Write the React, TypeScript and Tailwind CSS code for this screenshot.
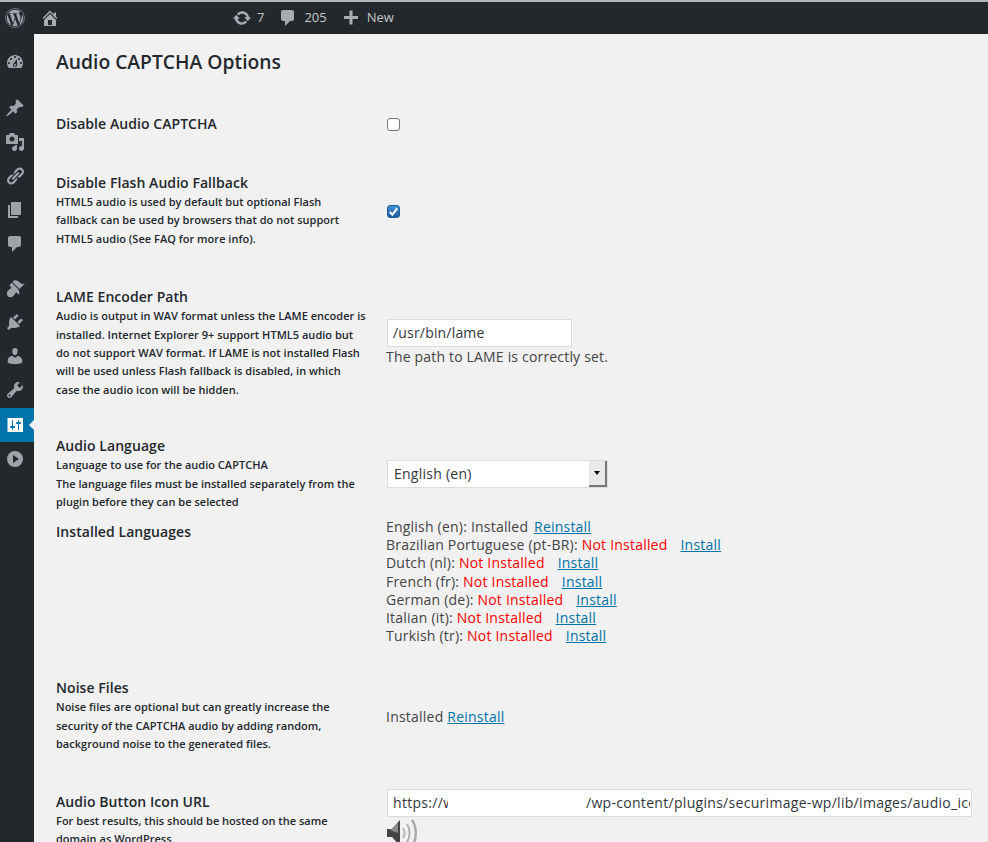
import React from "react";
import { FaWordpress } from "react-icons/fa";

const P = {
  dashboard: "M3.76 16h12.48c1.1-1.37 1.76-3.11 1.76-5 0-4.42-3.58-8-8-8s-8 3.58-8 8c0 1.89.66 3.63 1.76 5zM10 4c.55 0 1 .45 1 1s-.45 1-1 1-1-.45-1-1 .45-1 1-1zM6 6c.55 0 1 .45 1 1s-.45 1-1 1-1-.45-1-1 .45-1 1-1zm8 0c.55 0 1 .45 1 1s-.45 1-1 1-1-.45-1-1 .45-1 1-1zm-5.37 5.55L12 7v6c0 1.1-.9 2-2 2s-2-.9-2-2c0-.57.24-1.08.63-1.45zM4 10c.55 0 1 .45 1 1s-.45 1-1 1-1-.45-1-1 .45-1 1-1zm12 0c.55 0 1 .45 1 1s-.45 1-1 1-1-.45-1-1 .45-1 1-1zm-5 3c0-.55-.45-1-1-1s-1 .45-1 1 .45 1 1 1 1-.45 1-1z",
  pin: "M10.44 3.02l1.82-1.82 6.36 6.35-1.83 1.82c-1.05-.68-2.48-.57-3.41.36l-.75.75c-.92.93-1.04 2.35-.35 3.41l-1.83 1.82-2.41-2.41-2.8 2.79c-.42.42-3.38 2.71-3.8 2.29s1.86-3.39 2.28-3.81l2.79-2.79L4.1 9.36l1.83-1.82c1.05.69 2.48.57 3.4-.36l.75-.75c.93-.92 1.05-2.35.36-3.41z",
  media: "M13 11V4c0-.55-.45-1-1-1h-1.67L9 1H5L3.67 3H2c-.55 0-1 .45-1 1v7c0 .55.45 1 1 1h10c.55 0 1-.45 1-1zM7 4.5c1.38 0 2.5 1.12 2.5 2.5S8.38 9.5 7 9.5 4.5 8.38 4.5 7 5.62 4.5 7 4.5zM14 6h5v10.5c0 1.38-1.12 2.5-2.5 2.5S14 17.88 14 16.5s1.12-2.5 2.5-2.5c.17 0 .34.02.5.05V9h-3V6zm-4 8.05V13h2v3.5c0 1.38-1.12 2.5-2.5 2.5S7 17.88 7 16.5 8.12 14 9.5 14c.17 0 .34.02.5.05z",
  links: "M17.74 2.76c1.68 1.69 1.68 4.41 0 6.1l-1.53 1.52c-1.12 1.12-2.7 1.47-4.14 1.09l2.62-2.61.76-.77.76-.76c.84-.84.84-2.2 0-3.04-.84-.85-2.2-.85-3.04 0l-.77.76-3.38 3.38c-.37-1.44-.02-3.02 1.1-4.14l1.52-1.53c1.69-1.68 4.42-1.68 6.1 0zM8.59 13.43l5.34-5.34c.42-.42.42-1.1 0-1.52-.44-.43-1.13-.39-1.53 0l-5.33 5.34c-.42.42-.42 1.1 0 1.52.44.43 1.13.39 1.52 0zm-.76 2.29l4.14-4.15c.38 1.44.03 3.02-1.09 4.14l-1.52 1.53c-1.69 1.68-4.41 1.68-6.1 0-1.68-1.68-1.68-4.42 0-6.1l1.53-1.52c1.12-1.12 2.7-1.47 4.14-1.1l-4.14 4.15c-.85.84-.85 2.2 0 3.05.84.84 2.2.84 3.04 0z",
  page: "M6 15V2h10v13H6zm-1 1h8v2H3V5h2v11z",
  comment: "M5 2h9c1.1 0 2 .9 2 2v7c0 1.1-.9 2-2 2h-2l-5 5v-5H5c-1.1 0-2-.9-2-2V4c0-1.1.9-2 2-2z",
  appearance: "M14.48 11.06L7.41 3.99l1.5-1.5c.5-.56 2.3-.47 3.51.32 1.21.8 1.43 1.28 2.91 2.1 1.18.64 2.45 1.26 4.45.85zm-.71.71L6.7 4.7 4.93 6.47c-.39.39-.39 1.02 0 1.41l1.06 1.06c.39.39.39 1.03 0 1.42-.6.6-1.43 1.11-2.21 1.69-.35.26-.7.53-1.01.84-1.35 1.39-1.14 4.16.04 5.34s3.95 1.39 5.3.02c.31-.31.58-.66.84-1.01.58-.78 1.09-1.61 1.69-2.21.39-.39 1.03-.39 1.42 0l1.06 1.06c.39.39 1.02.39 1.41 0z",
  plugins: "M13.11 4.36L9.87 7.6 8 5.73l3.24-3.24c.35-.34 1.05-.2 1.56.32.52.51.66 1.21.31 1.55zm-8 1.77l.91-1.12 9.01 9.01-1.19.84c-.71.71-2.63 1.16-3.82 1.16H6.14L4.9 17.26c-.59.59-1.54.59-2.12 0-.59-.58-.59-1.53 0-2.12l1.24-1.24v-3.88c0-1.13.4-3.19 1.09-3.89zm7.26 3.97l3.24-3.24c.34-.35 1.04-.21 1.55.31.52.51.66 1.21.31 1.55l-3.24 3.25z",
  users: "M10 9.25c-2.27 0-2.73-3.44-2.73-3.44C7 4.02 7.82 2 9.97 2c2.16 0 2.98 2.02 2.71 3.81 0 0-.41 3.44-2.68 3.44zm0 2.57L12.72 10c2.39 0 4.52 2.33 4.52 4.53v2.49s-3.65 1.13-7.24 1.13c-3.65 0-7.24-1.13-7.24-1.13v-2.49c0-2.25 1.94-4.48 4.47-4.48z",
  tools: "M16.68 9.77c-1.34 1.34-3.3 1.67-4.95.99l-5.41 6.52c-.99.99-2.59.99-3.58 0s-.99-2.59 0-3.57l6.52-5.42c-.68-1.65-.35-3.61.99-4.95 1.28-1.28 3.12-1.62 4.72-1.06l-2.89 2.89 2.82 2.82 2.86-2.87c.53 1.58.18 3.39-1.08 4.65zM3.81 16.21c.4.39 1.04.39 1.43 0 .4-.4.4-1.04 0-1.43-.39-.4-1.03-.4-1.43 0-.39.39-.39 1.03 0 1.43z",
  settings: "M18 17V3H2.500v14zM8 11h1c.55 0 1 .45 1 1s-.45 1-1 1H8v1.500c0 .28-.22.5-.5.5s-.5-.22-.5-.5V13H6c-.55 0-1-.45-1-1s.45-1 1-1h1V5.500c0-.28.22-.5.5-.5s.5.22.5.5V11zm5-2h-1c-.55 0-1-.45-1-1s.45-1 1-1h1V5.500c0-.28.22-.5.5-.5s.5.22.5.5V7h1c.55 0 1 .45 1 1s-.45 1-1 1h-1v5.500c0 .28-.22.5-.5.5s-.5-.22-.5-.5V9z",
  play: "M10 2a8 8 0 1 0 0 16 8 8 0 0 0 0-16zM8 6l6 4-6 4z",
  home: "M16 8.5l1.53 1.53-1.06 1.06L10 4.62l-6.47 6.47-1.06-1.06L10 2.5l4 4v-2h2v4zm-6-2.46l6 5.99V18H4v-5.97zM12 17v-5H8v5h4z",
  update: "M10.2 3.28c3.53 0 6.43 2.61 6.92 6h2.08l-3.5 4-3.5-4h2.32c-.45-1.97-2.21-3.45-4.32-3.45-1.45 0-2.73.71-3.54 1.78L4.95 5.66C6.23 4.2 8.11 3.28 10.2 3.28zm-.4 13.44c-3.52 0-6.43-2.61-6.92-6H.8l3.5-4c1.17 1.33 2.33 2.67 3.5 4H5.48c.45 1.97 2.21 3.45 4.32 3.45 1.45 0 2.73-.71 3.54-1.78l1.71 1.95c-1.28 1.46-3.15 2.38-5.25 2.38z",
  plus: "M17 8v3h-5.5v5.5h-3V11H3V8h5.5V2.500h3V8z",
};

function Icon({ d, className }: { d: string; className?: string }) {
  return (
    <svg viewBox="0 0 20 20" fill="currentColor" fillRule="evenodd" className={className}>
      <path d={d} />
    </svg>
  );
}

function SideItem({ d, active }: { d: string; active?: boolean }) {
  return (
    <div className={`relative h-[34px] flex items-center justify-center pr-1 ${active ? "bg-[#0073aa] text-white" : "text-[#9ea3a8]"}`}>
      <Icon d={d} className="w-5 h-5" />
      {active && (
        <div className="absolute right-0 top-[12px] w-0 h-0 border-y-[5px] border-y-transparent border-r-[5px] border-r-[#f1f1f1]" />
      )}
    </div>
  );
}

function Label({ children }: { children: React.ReactNode }) {
  return <div className="text-[14px] font-semibold leading-[18px] tracking-[0.06px] text-[#23282d]">{children}</div>;
}

function Desc({ children }: { children: React.ReactNode }) {
  return <div className="mt-[1px] text-[11px] font-semibold leading-[18.4px] tracking-[0.02px] text-[#23282d]">{children}</div>;
}

function Link({ children }: { children: React.ReactNode }) {
  return <span className="text-[#0073aa] underline">{children}</span>;
}

function Lang({ name }: { name: string }) {
  return (
    <div className="h-[18.2px] whitespace-nowrap">
      {name}: <span className="text-[#ff0000]">Not Installed</span>
      <span className="inline-block w-[13px]" />
      <Link>Install</Link>
    </div>
  );
}

function Speaker() {
  return (
    <svg viewBox="0 0 32 32" className="w-8 h-8" fill="none">
      <path d="M1 12h5l8-9v26l-8-9H1z" fill="#444" />
      <path d="M4 13l8-7v10z" fill="#8a8a8a" />
      <path d="M17 11c2 3 2 7 0 10" stroke="#b5b5b5" strokeWidth="2" />
      <path d="M21 7c3.500 5 3.500 13 0 18" stroke="#b0b0b0" strokeWidth="2" />
      <path d="M26 3c5 7 5 19 0 26" stroke="#aaa" strokeWidth="2.500" />
    </svg>
  );
}

export default function App() {
  return (
    <div className="w-[988px] h-[842px] overflow-hidden bg-[#f1f1f1] flex flex-col font-['Open_Sans',sans-serif] text-[14px] text-[#444]">
      <div className="h-[34px] shrink-0 bg-[#23282d] border-t-2 border-[#b4b5b6] flex items-center text-[#c4c6c9] text-[13px]">
        <FaWordpress className="w-5 h-5 ml-[5px] text-[#a0a5aa]" />
        <Icon d={P.home} className="w-5 h-5 ml-[15px] text-[#a8acb0]" />
        <Icon d={P.update} className="w-5 h-5 ml-[172px] text-[#a8acb0]" />
        <span className="ml-[5px]">7</span>
        <Icon d={P.comment} className="w-5 h-5 ml-[14px] text-[#a8acb0]" />
        <span className="ml-[6px]">205</span>
        <Icon d={P.plus} className="w-5 h-5 ml-[14px] text-[#a8acb0]" />
        <span className="ml-[6px]">New</span>
      </div>
      <div className="flex flex-1 min-h-0">
        <div className="w-[34px] shrink-0 bg-[#23282d] pt-[11px]">
          <SideItem d={P.dashboard} />
          <div className="h-3" />
          <SideItem d={P.pin} />
          <SideItem d={P.media} />
          <SideItem d={P.links} />
          <SideItem d={P.page} />
          <SideItem d={P.comment} />
          <div className="h-[10px]" />
          <SideItem d={P.appearance} />
          <SideItem d={P.plugins} />
          <SideItem d={P.users} />
          <SideItem d={P.tools} />
          <div className="h-px" />
          <SideItem d={P.settings} active />
          <SideItem d={P.play} />
        </div>
        <div className="flex-1 min-w-0 pl-[22px] overflow-hidden">
          <h1 className="mt-[14px] text-[19.3px] font-semibold leading-[27px] text-[#23282d]">Audio CAPTCHA Options</h1>

          <div className="flex mt-[40px] items-center">
            <div className="w-[331px] shrink-0"><Label>Disable Audio CAPTCHA</Label></div>
            <div className="w-[13px] h-[13px] rounded-[3px] border border-[#767676] bg-white" />
          </div>

          <div className="flex mt-[41px] items-center">
            <div className="w-[331px] shrink-0">
              <Label>Disable Flash Audio Fallback</Label>
              <Desc>HTML5 audio is used by default but optional Flash<br />fallback can be used by browsers that do not support<br />HTML5 audio (See FAQ for more info).</Desc>
            </div>
            <div className="w-[13px] h-[13px] rounded-[3px] bg-linear-to-b from-[#3f94d8] to-[#1c5c9c] border border-[#1b5e9b] flex items-center justify-center">
              <svg viewBox="0 0 12 12" className="w-[11px] h-[11px]" fill="none"><path d="M2 6.500l2.800 3L10 2.500" stroke="#fff" strokeWidth="2.200" /></svg>
            </div>
          </div>

          <div className="flex mt-[40px]">
            <div className="w-[330px] shrink-0">
              <Label>LAME Encoder Path</Label>
              <Desc>Audio is output in WAV format unless the LAME encoder is<br />installed. Internet Explorer 9+ support HTML5 audio but<br />do not support WAV format. If LAME is not installed Flash<br />will be used unless Flash fallback is disabled, in which<br />case the audio icon will be hidden.</Desc>
            </div>
            <div className="pt-[31px] tracking-[0.18px]">
              <div className="w-[185px] h-[28px] ml-px border border-[#ddd] bg-white px-[5px] pb-[2px] flex items-center text-[14px] text-[#32373c]">/usr/bin/lame</div>
              <div className="leading-[19px] mt-[0px]">The path to LAME is correctly set.</div>
            </div>
          </div>

          <div className="flex mt-[38px]">
            <div className="w-[330px] shrink-0">
              <Label>Audio Language</Label>
              <Desc>Language to use for the audio CAPTCHA<br />The language files must be installed separately from the<br />plugin before they can be selected</Desc>
            </div>
            <div className="pt-[23px] tracking-[0.25px]">
              <div className="w-[221px] h-[28px] ml-px border border-[#ddd] bg-white pl-[6px] flex items-center justify-between text-[14px] text-[#32373c]">
                <span className="mb-[2px]">English (en)</span>
                <div className="w-[18px] h-[26px] bg-[#e9e9e9] border-r-2 border-b-2 border-[#777] flex items-center justify-center">
                  <div className="w-0 h-0 border-x-[3px] border-x-transparent border-t-[4px] border-t-black" />
                </div>
              </div>
            </div>
          </div>

          <div className="flex mt-[8px]">
            <div className="w-[330px] shrink-0 pt-[4px]"><Label>Installed Languages</Label></div>
            <div className="leading-[18.2px] tracking-[0.21px] mt-[-1.4px]">
              <div className="h-[18.2px] whitespace-nowrap">English (en): Installed <span className="ml-[2px]"><Link>Reinstall</Link></span></div>
              <Lang name="Brazilian Portuguese (pt-BR)" />
              <Lang name="Dutch (nl)" />
              <Lang name="French (fr)" />
              <Lang name="German (de)" />
              <Lang name="Italian (it)" />
              <Lang name="Turkish (tr)" />
            </div>
          </div>

          <div className="flex mt-[34px] items-center">
            <div className="w-[330px] shrink-0">
              <Label>Noise Files</Label>
              <Desc>Noise files are optional but can greatly increase the<br />security of the CAPTCHA audio by adding random,<br />background noise to the generated files.</Desc>
            </div>
            <div className="tracking-[0.22px]">Installed <Link>Reinstall</Link></div>
          </div>

          <div className="flex mt-[39px]">
            <div className="w-[330px] shrink-0">
              <Label>Audio Button Icon URL</Label>
              <Desc>For best results, this should be hosted on the same<br />domain as WordPress</Desc>
            </div>
            <div className="min-w-0 mt-[-4px]">
              <div className="w-[585px] h-[28px] ml-px border border-[#ddd] bg-white pl-[5px] pr-px flex items-center text-[14px] text-[#32373c] tracking-[0.3px]">
                <div className="flex w-full overflow-hidden whitespace-nowrap">
                  <span className="w-[55px] shrink-0 overflow-hidden">https://w</span>
                  <span className="w-[138px] shrink-0" />
                  <span>/wp-content/plugins/securimage-wp/lib/images/audio_icon.png</span>
                </div>
              </div>
              <Speaker />
            </div>
          </div>
        </div>
      </div>
    </div>
  );
}
